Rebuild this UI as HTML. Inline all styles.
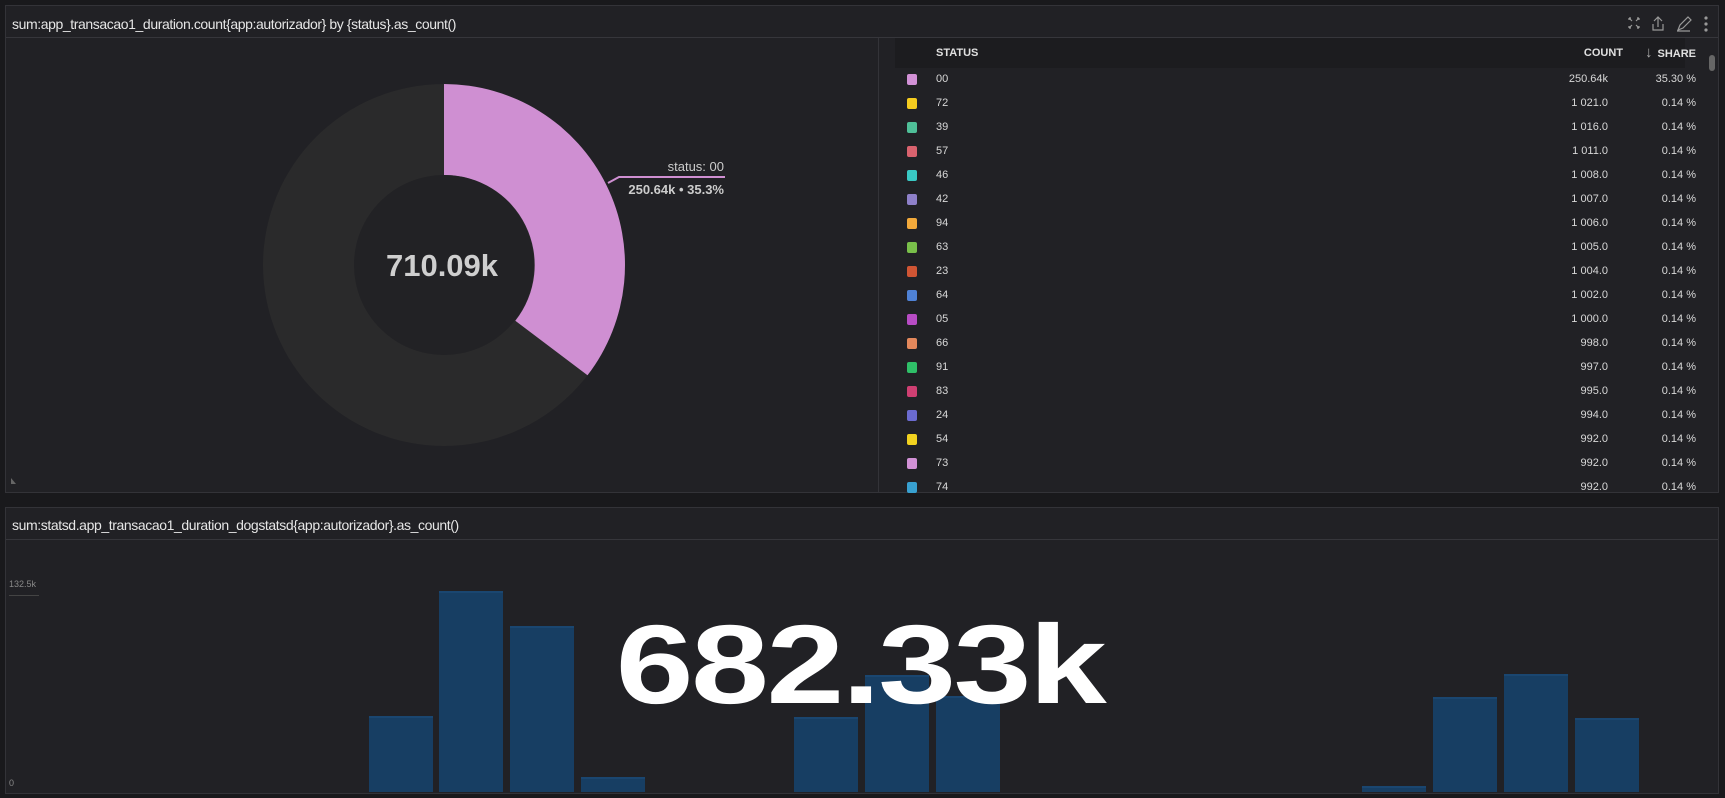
<!DOCTYPE html>
<html><head><meta charset="utf-8"><style>
*{margin:0;padding:0;box-sizing:border-box}
body{width:1725px;height:798px;background:#19191c;font-family:"Liberation Sans",sans-serif;position:relative;overflow:hidden;color:#ddd}
.panel{position:absolute;background:#212125;border:1px solid #333338}
.title{position:absolute;left:6px;font-size:14px;color:#e6e6e6;letter-spacing:-0.4px}
.sep{position:absolute;left:0;right:0;height:1px;background:#36363b}
.row{position:absolute;left:0;width:840px;height:24px;font-size:11px;color:#d8d8d8}
.row .sw{position:absolute;left:28px;top:3px;width:10px;height:11px;border-radius:2px}
.row .st{position:absolute;left:57px;top:2px}
.row .ct{position:absolute;right:111px;top:2px;text-align:right}
.row .sh{position:absolute;right:23px;top:2px;text-align:right}
.bar{position:absolute;width:64px;background:#173e63;border-top:2px solid #1a4670}
</style></head><body>
<div class="panel" style="left:5px;top:5px;width:1714px;height:488px">
 <div class="title" style="top:10px">sum:app_transacao1_duration.count{app:autorizador} by {status}.as_count()</div>
 <div class="sep" style="top:31px"></div>
 <svg style="position:absolute;left:1620px;top:9px" width="90" height="18" viewBox="0 0 90 18">
  <g stroke="#999" stroke-width="1.2" fill="none">
   <path d="M3 3l3 3M3 3h2M3 3v2M13 3l-3 3M13 3h-2M13 3v2M3 13l3-3M3 13h2M3 13v-2M13 13l-3-3M13 13h-2M13 13v-2"/>
   <path d="M32 2v10M28 6l4-4 4 4M27 9v6h10v-6"/>
   <path d="M52 15l2-5 8-8 3 3-8 8zM51 16h13"/>
   <circle cx="80" cy="3" r="1" fill="#999"/><circle cx="80" cy="9" r="1" fill="#999"/><circle cx="80" cy="15" r="1" fill="#999"/>
  </g>
 </svg>
 <div style="position:absolute;left:872px;top:32px;width:1px;height:455px;background:#333338"></div>
 <svg style="position:absolute;left:0;top:0" width="872" height="488">
  <circle cx="438" cy="259" r="181" fill="#2a2a2b"/>
  <path d="M438 78 A181 181 0 0 1 581.5 369.3 L509.3 314.8 A90 90 0 0 0 438 169 Z" fill="#cf8fd2"/>
  <circle cx="438" cy="259" r="90" fill="#222225"/>
  <text x="436" y="270" text-anchor="middle" font-size="31" font-weight="bold" fill="#cfcfcf" font-family="Liberation Sans">710.09k</text>
  <path d="M602 177 L613 171 L719 171" stroke="#cf8fd2" stroke-width="2" fill="none"/>
  <text x="718" y="165" text-anchor="end" font-size="13" fill="#ccc" font-family="Liberation Sans">status: 00</text>
  <text x="718" y="188" text-anchor="end" font-size="13" font-weight="bold" fill="#ccc" font-family="Liberation Sans">250.64k • 35.3%</text>
  <path d="M5 478 L5 472 L10 478 Z" fill="#666"/>
 </svg>
 <div style="position:absolute;left:873px;top:32px;width:840px;height:455px;overflow:hidden">
  <div style="position:absolute;left:16px;top:0;width:790px;height:30px;background:#1c1c1f"></div>
  <div style="position:absolute;left:57px;top:9px;font-size:11px;font-weight:bold;color:#e0e0e0">STATUS</div>
  <div style="position:absolute;right:96px;top:9px;font-size:11px;font-weight:bold;color:#e0e0e0">COUNT</div>
  <div style="position:absolute;right:23px;top:6px;font-size:11px;font-weight:bold;color:#e0e0e0"><span style="font-weight:normal;font-size:15px;color:#aaa;margin-right:5px">↓</span>SHARE</div>
  <div style="position:absolute;left:830px;top:17px;width:6px;height:16px;border-radius:3px;background:#666"></div>
  <div id="rows"></div>
 </div>
</div>
<div class="panel" style="left:5px;top:507px;width:1714px;height:287px">
 <div class="title" style="top:9px">sum:statsd.app_transacao1_duration_dogstatsd{app:autorizador}.as_count()</div>
 <div class="sep" style="top:31px"></div>
 <div style="position:absolute;left:3px;top:71px;font-size:9px;color:#888">132.5k</div>
 <div style="position:absolute;left:3px;top:87px;width:30px;height:1px;background:#444"></div>
 <div style="position:absolute;left:3px;top:270px;font-size:9px;color:#888">0</div>
</div>
<div class="bar" style="left:369px;top:716px;height:76px"></div>
<div class="bar" style="left:439px;top:591px;height:201px"></div>
<div class="bar" style="left:510px;top:626px;height:166px"></div>
<div class="bar" style="left:581px;top:777px;height:15px"></div>
<div class="bar" style="left:794px;top:717px;height:75px"></div>
<div class="bar" style="left:865px;top:675px;height:117px"></div>
<div class="bar" style="left:936px;top:696px;height:96px"></div>
<div class="bar" style="left:1362px;top:786px;height:6px"></div>
<div class="bar" style="left:1433px;top:697px;height:95px"></div>
<div class="bar" style="left:1504px;top:674px;height:118px"></div>
<div class="bar" style="left:1575px;top:718px;height:74px"></div>
<div style="position:absolute;left:560px;top:600px;width:600px;text-align:center;font-size:112px;font-weight:bold;color:#fff;line-height:130px;letter-spacing:-2px;transform:scaleX(1.25);transform-origin:300px 50%">682.33k</div>
<script>
var d=[["00","#d291d6","250.64k","35.30"],["72","#f5cc1f","1 021.0","0.14"],["39","#4fbf98","1 016.0","0.14"],["57","#d9626e","1 011.0","0.14"],["46","#39c9c4","1 008.0","0.14"],["42","#8e80c9","1 007.0","0.14"],["94","#f2a93b","1 006.0","0.14"],["63","#79bf4a","1 005.0","0.14"],["23","#d05534","1 004.0","0.14"],["64","#4f82d6","1 002.0","0.14"],["05","#b84cc5","1 000.0","0.14"],["66","#e3885c","998.0","0.14"],["91","#2fbf68","997.0","0.14"],["83","#cf3f72","995.0","0.14"],["24","#6b6bd0","994.0","0.14"],["54","#f2d21f","992.0","0.14"],["73","#d291d6","992.0","0.14"],["74","#38a0d0","992.0","0.14"]];
var h="";d.forEach(function(r,i){h+='<div class="row" style="top:'+(33+i*24)+'px"><div class="sw" style="background:'+r[1]+'"></div><div class="st">'+r[0]+'</div><div class="ct">'+r[2]+'</div><div class="sh">'+r[3]+' %</div></div>';});
document.getElementById("rows").innerHTML=h;
</script>
</body></html>
